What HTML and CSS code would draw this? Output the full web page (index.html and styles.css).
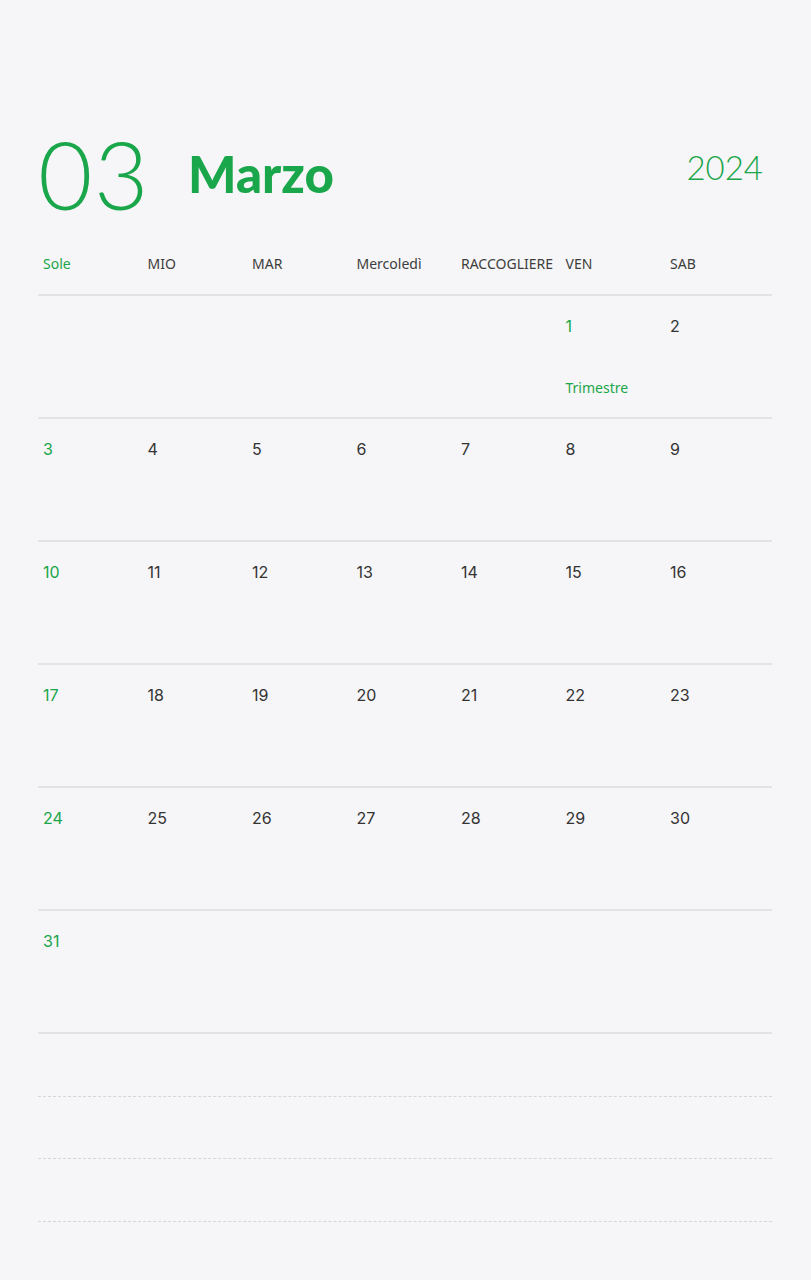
FILE: index.html
```html
<!DOCTYPE html>
<html lang="it">
<head>
<meta charset="utf-8">
<title>Marzo 2024</title>
<link rel="stylesheet" href="styles.css">
</head>
<body>
<div class="page">
  <header class="head">
    <div class="num">03</div>
    <div class="month">Marzo</div>
    <div class="year">2024</div>
  </header>
  <div class="weekdays">
    <div class="wd sun">Sole</div>
    <div class="wd">MIO</div>
    <div class="wd">MAR</div>
    <div class="wd">Mercoledì</div>
    <div class="wd">RACCOGLIERE</div>
    <div class="wd">VEN</div>
    <div class="wd">SAB</div>
  </div>
  <div class="week">
    <div class="day"></div><div class="day"></div><div class="day"></div><div class="day"></div><div class="day"></div>
    <div class="day green"><span class="n">1</span><span class="note">Trimestre</span></div>
    <div class="day"><span class="n">2</span></div>
  </div>
  <div class="week">
    <div class="day green"><span class="n">3</span></div>
    <div class="day"><span class="n">4</span></div>
    <div class="day"><span class="n">5</span></div>
    <div class="day"><span class="n">6</span></div>
    <div class="day"><span class="n">7</span></div>
    <div class="day"><span class="n">8</span></div>
    <div class="day"><span class="n">9</span></div>
  </div>
  <div class="week">
    <div class="day green"><span class="n">10</span></div>
    <div class="day"><span class="n">11</span></div>
    <div class="day"><span class="n">12</span></div>
    <div class="day"><span class="n">13</span></div>
    <div class="day"><span class="n">14</span></div>
    <div class="day"><span class="n">15</span></div>
    <div class="day"><span class="n">16</span></div>
  </div>
  <div class="week">
    <div class="day green"><span class="n">17</span></div>
    <div class="day"><span class="n">18</span></div>
    <div class="day"><span class="n">19</span></div>
    <div class="day"><span class="n">20</span></div>
    <div class="day"><span class="n">21</span></div>
    <div class="day"><span class="n">22</span></div>
    <div class="day"><span class="n">23</span></div>
  </div>
  <div class="week">
    <div class="day green"><span class="n">24</span></div>
    <div class="day"><span class="n">25</span></div>
    <div class="day"><span class="n">26</span></div>
    <div class="day"><span class="n">27</span></div>
    <div class="day"><span class="n">28</span></div>
    <div class="day"><span class="n">29</span></div>
    <div class="day"><span class="n">30</span></div>
  </div>
  <div class="week">
    <div class="day green"><span class="n">31</span></div>
    <div class="day"></div><div class="day"></div><div class="day"></div><div class="day"></div><div class="day"></div><div class="day"></div>
  </div>
  <div class="notes">
    <div class="line"></div>
    <div class="line"></div>
    <div class="line"></div>
  </div>
</div>
</body>
</html>
```

FILE: styles.css
```css
html, body {
  margin: 0;
  padding: 0;
  background: #f6f5f7;
}
.page {
  width: 734px;
  margin-left: 38px;
  padding-top: 127px;
  font-family: "Noto Sans", sans-serif;
  color: #333;
}
.head {
  display: flex;
  align-items: flex-start;
  height: 114px;
}
.num {
  font-family: Lato, sans-serif;
  font-weight: 300;
  font-size: 94px;
  line-height: 94px;
  color: #1aa64a;
  letter-spacing: 1.5px;
}
.month {
  font-family: Lato, sans-serif;
  font-weight: 900;
  font-size: 51px;
  line-height: 51px;
  color: #1aa64a;
  margin-left: 38px;
  margin-top: 21px;
}
.year {
  font-family: Lato, sans-serif;
  font-weight: 300;
  font-size: 33px;
  line-height: 33px;
  color: #1aa64a;
  margin-left: auto;
  margin-right: 9px;
  margin-top: 24px;
}
.weekdays {
  display: grid;
  grid-template-columns: repeat(7, 104.5px);
  height: 44px;
  padding-bottom: 9px;
  border-bottom: 2px solid #e3e2e4;
  align-items: center;
}
.wd {
  font-size: 14px;
  padding-left: 5px;
  color: #3d3d3d;
  white-space: nowrap;
}
.wd.sun {
  color: #1aa64a;
}
.week {
  display: grid;
  grid-template-columns: repeat(7, 104.5px);
  height: 121px;
  border-bottom: 2px solid #e3e2e4;
}
.day {
  display: flex;
  flex-direction: column;
  padding-left: 5px;
  padding-top: 20px;
}
.n {
  font-family: Inter, sans-serif;
  font-size: 16px;
  line-height: 20px;
  color: #333;
}
.green .n {
  color: #1aa64a;
}
.note {
  margin-top: 42px;
  font-size: 14px;
  line-height: 20px;
  color: #1aa64a;
}
.notes {
  display: flex;
  flex-direction: column;
}
.line {
  height: 61.5px;
  border-bottom: 1px dashed #d6d5d8;
}
```
